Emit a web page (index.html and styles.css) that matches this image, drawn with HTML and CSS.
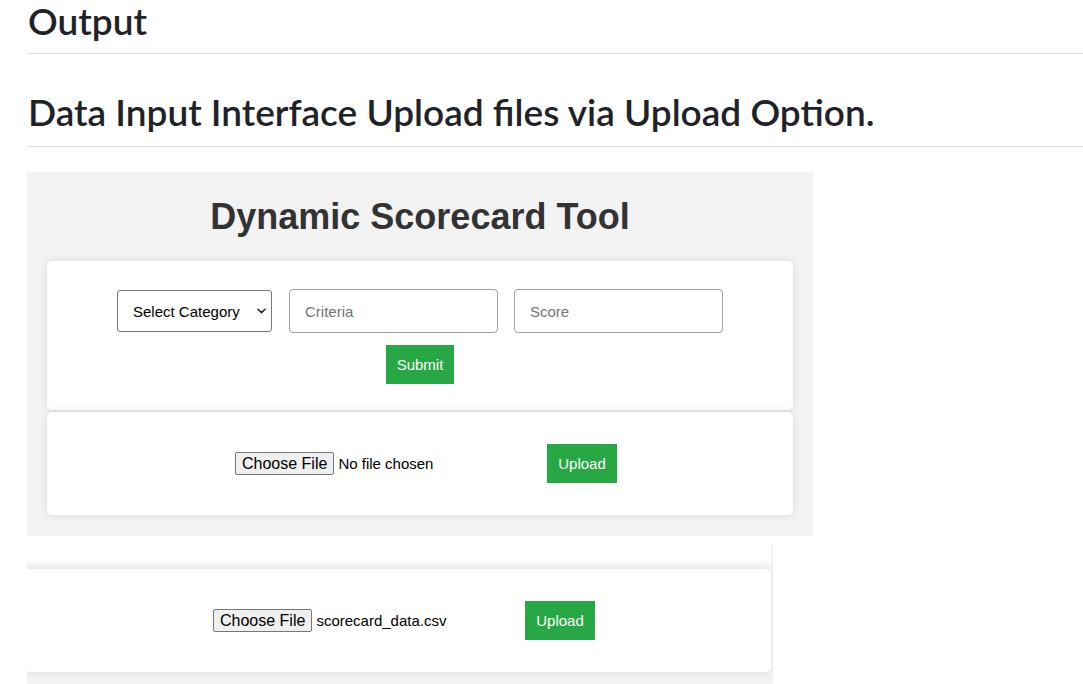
FILE: index.html
```html
<!DOCTYPE html>
<html lang="en">
<head>
<meta charset="utf-8">
<title>Output</title>
<link rel="stylesheet" href="styles.css">
</head>
<body>
<h2 class="doc-h doc-h-first">Output</h2>
<h2 class="doc-h doc-h-second">Data Input Interface Upload files via Upload Option.</h2>

<div class="tool">
  <h1 class="tool-title">Dynamic Scorecard Tool</h1>
  <div class="card card-form">
    <div class="form-row">
      <span class="sel-wrap">
        <select class="sel">
          <option>Select Category</option>
        </select>
        <svg class="sel-arrow" width="9" height="6" viewBox="0 0 9 6" aria-hidden="true"><path d="M1 1.2 L4.5 4.6 L8 1.2" fill="none" stroke="#222" stroke-width="1.5" stroke-linecap="round" stroke-linejoin="round"/></svg>
      </span>
      <input class="txt" type="text" placeholder="Criteria">
      <input class="txt" type="text" placeholder="Score">
    </div>
    <div class="submit-row">
      <button class="btn">Submit</button>
    </div>
  </div>
  <div class="card card-upload">
    <div class="upload-row">
      <input class="file" type="file">
      <button class="btn btn-upload">Upload</button>
    </div>
  </div>
</div>

<div class="shot">
  <div class="shot-inner">
    <div class="prev-tail"></div>
    <div class="card card-upload card-shot">
      <div class="upload-row">
        <span class="fake-file"><span class="fake-btn">Choose File</span><span class="fake-name">scorecard_data.csv</span></span>
        <button class="btn btn-upload">Upload</button>
      </div>
    </div>
  </div>
</div>
</body>
</html>
```
FILE: styles.css
```css
html, body {
  margin: 0;
  padding: 0;
  background: #ffffff;
}
body {
  padding-left: 27px;
  font-family: "Liberation Sans", Arial, sans-serif;
  overflow: hidden;
}
.doc-h {
  font-family: Lato, "Open Sans", sans-serif;
  font-weight: 600;
  font-size: 37px;
  line-height: 42px;
  color: #1f2328;
  margin: 0;
  padding-left: 1px;
  border-bottom: 1px solid #d8dee4;
}
.doc-h-first {
  padding-bottom: 11px;
}
.doc-h-second {
  margin-top: 37px;
  padding-bottom: 13px;
}
.tool {
  margin-top: 25px;
  width: 786px;
  box-sizing: border-box;
  background: #f3f3f3;
  padding: 24px 20px 21px;
}
.tool-title {
  margin: 0 0 24px;
  text-align: center;
  font-family: "Liberation Sans", Arial, sans-serif;
  font-weight: 700;
  font-size: 36px;
  line-height: 41px;
  color: #333333;
}
.card {
  background: #ffffff;
  border-radius: 5px;
  box-shadow: 0 0 10px rgba(0, 0, 0, 0.1);
}
.card-form {
  padding: 28px 20px 26px;
}
.card-upload {
  margin-top: 2px;
  padding: 32px 20px;
}
.form-row {
  display: flex;
  justify-content: center;
  align-items: center;
  gap: 16px;
}
.sel-wrap {
  position: relative;
  display: inline-flex;
  margin-right: 1px;
}
.sel {
  -webkit-appearance: none;
  appearance: none;
  width: 155px;
  height: 42px;
  box-sizing: border-box;
  padding: 0 24px 0 15px;
  font-family: "Liberation Sans", Arial, sans-serif;
  font-size: 15px;
  color: #000;
  background: #fff;
  border: 1px solid #767676;
  border-radius: 3px;
}
.sel-arrow {
  position: absolute;
  right: 6px;
  top: 18px;
  pointer-events: none;
}
.txt {
  width: 209px;
  height: 44px;
  box-sizing: border-box;
  padding: 0 15px;
  font-family: "Liberation Sans", Arial, sans-serif;
  font-size: 15px;
  color: #000;
  border: 1px solid #a0a0a0;
  border-radius: 4px;
  outline: none;
}
.txt::placeholder {
  color: #757575;
}
.submit-row {
  display: flex;
  justify-content: center;
  margin-top: 12px;
}
.btn {
  height: 39px;
  padding: 0 11px;
  border: none;
  border-radius: 0;
  background: #28a745;
  color: #ffffff;
  font-family: "Liberation Sans", Arial, sans-serif;
  font-size: 15px;
}
.upload-row {
  display: flex;
  justify-content: center;
  align-items: center;
  padding-left: 12px;
}
.btn-upload {
  margin-left: 10px;
  width: 70px;
  padding: 0;
}
.file {
  width: 302px;
  font-family: "Liberation Sans", Arial, sans-serif;
  font-size: 15px;
  color: #000;
}
.file::file-selector-button {
  font-family: "Liberation Sans", Arial, sans-serif;
  font-size: 16px;
  color: #000;
  background: #efefef;
  border: 1px solid #767676;
  border-radius: 2px;
  padding: 1px 6px;
  margin-right: 4px;
  height: 23px;
}
.fake-file {
  width: 302px;
  display: flex;
  align-items: center;
  font-size: 15px;
  color: #000;
}
.fake-btn {
  box-sizing: border-box;
  height: 23px;
  line-height: 21px;
  font-size: 16px;
  padding: 0 6px;
  background: #efefef;
  border: 1px solid #767676;
  border-radius: 2px;
  margin-right: 4px;
}
.shot {
  margin-top: 8px;
  width: 746px;
  height: 160px;
  overflow: hidden;
}
.shot-inner {
  margin-left: -22px;
  width: 786px;
  box-sizing: border-box;
  background: #f3f3f3;
  padding: 0 20px 21px;
}
.prev-tail {
  height: 25px;
  background: linear-gradient(to bottom, #ffffff 0, #ffffff 55%, #f4f4f4 100%);
}
.card-shot {
  margin-top: 0;
}
```
